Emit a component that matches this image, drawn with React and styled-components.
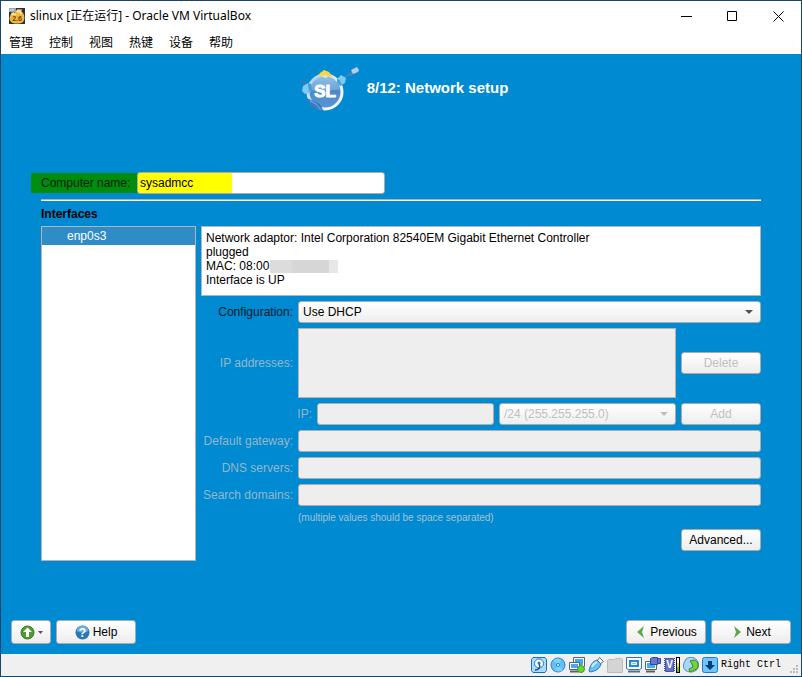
import React from "react";
import styled, { createGlobalStyle, css } from "styled-components";

const GlobalStyle = createGlobalStyle`
  *, *::before, *::after { box-sizing: border-box; }
  body { margin: 0; }
  button, input, select, textarea { font: inherit; color: inherit; margin: 0; }
  svg { display: block; flex: none; }
`;

const AppWindow = styled.div`
  min-height: 100vh;
  display: flex;
  flex-direction: column;
  border: 1px solid #17486b;
  background: #fff;
  color: #000;
  font: 12px/14px "Liberation Sans", Arial, sans-serif;
`;

const TitleBar = styled.header`
  height: 30px;
  display: flex;
  align-items: center;
  padding-left: 8px;
`;

const Title = styled.h1`
  flex: 1;
  margin: 0;
  padding-left: 5px;
  font: 12px/18px "Noto Sans", "Noto Sans CJK SC", sans-serif;
`;

const WindowButton = styled.button`
  width: 46px;
  height: 30px;
  padding: 0;
  border: 0;
  background: none;
  display: grid;
  place-items: center;
`;

const MenuBar = styled.nav`
  height: 23px;
  display: flex;
  align-items: flex-start;
  gap: 16px;
  padding: 2px 0 0 8px;
`;

const MenuItem = styled.button`
  padding: 0;
  border: 0;
  background: none;
  font: 12px/18px "Noto Sans CJK SC", sans-serif;
`;

const Screen = styled.main`
  flex: 1;
  display: flex;
  flex-direction: column;
  background: #008ad2;
`;

const Heading = styled.div`
  height: 118px;
  padding: 8px 0 0 4px;
  display: flex;
  justify-content: center;
  align-items: flex-start;
  gap: 7px;
`;

const StepTitle = styled.h2`
  margin: 0;
  padding-top: 17px;
  color: #fff;
  font-size: 15px;
  line-height: 18px;
`;

const Form = styled.form`
  padding: 0 40px;
`;

const NameRow = styled.div`
  display: flex;
  align-items: center;
  margin-left: -10px;
`;

const NameLabel = styled.label`
  width: 106px;
  padding: 3px 5px 3px 10px;
  color: #001c08;
  background: #008c0d;
`;

const fieldBox = css`
  height: 22px;
  min-width: 0;
  border: 1px solid #aaa;
  border-radius: 3px;
`;

const NameInput = styled.input`
  ${fieldBox}
  width: 248px;
  padding: 0 2px;
  background: linear-gradient(90deg, #ff0 94px, #fff 94px);
`;

const Divider = styled.hr`
  height: 2px;
  margin: 5px 0 6px;
  border: 0;
  border-top: 1px solid #b0b0b0;
  background: #fff;
`;

const SectionTitle = styled.h3`
  margin: 0 0 5px;
  font-size: 12px;
  line-height: 14px;
`;

const Panels = styled.div`
  display: grid;
  grid-template-columns: 155px 1fr;
  gap: 5px;
`;

const InterfaceList = styled.ul`
  min-height: 335px;
  margin: 0;
  padding: 0;
  list-style: none;
  background: #fff;
  border: 1px solid #b4b4b4;
`;

const InterfaceItem = styled.li`
  padding: 2px 25px;
  background: #308cc6;
  color: #fff;
`;

const Details = styled.div`
  display: grid;
  grid-template-columns: 92px 1fr 80px;
  gap: 5px;
  align-content: start;
  align-items: center;
`;

const AdapterInfo = styled.div`
  grid-column: 1 / -1;
  height: 70px;
  padding: 4px;
  background: #fff;
  border: 1px solid #b4b4b4;
`;

const InfoLine = styled.div`
  display: flex;
  align-items: center;
`;

const Redaction = styled.span`
  width: 68px;
  height: 13px;
  margin-left: 1px;
  background: linear-gradient(90deg, #dcdcdc 22px, #d6d6d6 22px 59px, #e6e8e8 59px);
`;

const Label = styled.label`
  justify-self: end;
  white-space: nowrap;
  color: ${(p) => (p.$muted ? "#96b6ca" : "#001a2a")};
`;

const TextInput = styled.input`
  ${fieldBox}
  width: 100%;
  padding: 0 4px;
  ${(p) => p.$wide && "grid-column: 2 / -1;"}
  &:disabled {
    background: #eee;
    border-color: #b0acac;
  }
`;

const AddressArea = styled.textarea`
  display: block;
  width: 100%;
  height: 70px;
  resize: none;
  border: 1px solid #b4b4b4;
  background: #eee;
`;

const SelectBox = styled.div`
  min-width: 0;
  display: grid;
  grid-template-columns: 1fr 16px;
  align-items: center;
  ${(p) => p.$wide && "grid-column: 2 / -1;"}
  > svg { grid-area: 1 / 2; pointer-events: none; }
`;

const Select = styled.select`
  ${fieldBox}
  grid-area: 1 / 1 / 2 / 3;
  width: 100%;
  padding: 0 4px;
  appearance: none;
  background: linear-gradient(#fff, #eee);
  &:disabled { color: #c0c0c0; opacity: 1; }
`;

const AddressRow = styled.div`
  grid-column: 1 / 3;
  margin-left: 97px;
  display: grid;
  grid-template-columns: 14px 1fr 1fr;
  gap: 5px;
  align-items: center;
`;

const Button = styled.button`
  height: ${(p) => (p.$tall ? 24 : 22)}px;
  width: ${(p) => (p.$narrow ? 40 : 80)}px;
  padding: 0;
  display: flex;
  align-items: center;
  justify-content: center;
  gap: 3px;
  white-space: nowrap;
  border: 1px solid #aaa;
  border-radius: 3px;
  background: linear-gradient(#fff, #ededed);
  &:disabled { color: #c0c0c0; }
`;

const Note = styled.p`
  grid-column: 2 / -1;
  margin: 0;
  font-size: 10px;
  line-height: 13px;
  color: #a9c0ce;
`;

const LastCell = styled.div`
  grid-column: 3;
`;

const Footer = styled.footer`
  margin-top: auto;
  padding: 10px;
  display: flex;
  gap: 5px;
`;

const Spacer = styled.span`
  flex: 1;
`;

const StatusBar = styled.div`
  height: 22px;
  display: flex;
  align-items: center;
  justify-content: flex-end;
  gap: 3px;
  background: #f0f0f0;
`;

const HostKey = styled.span`
  font: 10px/14px "Liberation Mono", monospace;
`;

const Grip = styled.svg`
  align-self: flex-end;
  margin-left: 5px;
`;

const LogoText = styled.text`
  font: 700 17px "Liberation Sans", sans-serif;
  fill: #fff;
  stroke: #fff;
`;

const ChipText = styled.text`
  font: 700 10px "Liberation Sans", sans-serif;
  fill: #fff;
`;

const Arrow = ({ muted }) => (
  <svg width="9" height="5"><path d="M0 0h8L4 4z" fill={muted ? "#c0c0c0" : "#505050"} /></svg>
);

const VmIcon = () => (
  <svg width="16" height="16" viewBox="0 0 16 16">
    <path d="M0 0h16v16H0z" fill="#27313e" />
    <path d="M0 0h7v4H0z" fill="#9ba6b5" />
    <path d="M1 2h4M8 2h5" stroke="#e5e9ee" />
    <path d="M2 6c0-2 3-3 4-1 0-4 6-5 7-1 3 2 3 8 1 10-3 2-9 2-12 0-2-2-2-5 0-8z" fill="#f5b63c" />
    <path d="M3 7c1-2 3-1 4 0M8 4c2-2 4 0 4 2" stroke="#ffe3a0" strokeWidth="2" fill="none" />
    <text x="8" y="13" textAnchor="middle" fontFamily="Liberation Sans, sans-serif" fontSize="7" fontWeight="700" fill="#6a461b">2.6</text>
  </svg>
);

const Logo = () => (
  <svg width="62" height="54" viewBox="0 0 62 54" role="img" aria-label="Installer logo">
    <defs>
      <linearGradient id="globe" x2="0" y2="1">
        <stop stopColor="#8bbde8" /><stop offset=".45" stopColor="#4a89cb" /><stop offset="1" stopColor="#5c96d3" />
      </linearGradient>
      <linearGradient id="ring" x2="1" y2="1">
        <stop stopColor="#9ccbed" /><stop offset=".6" stopColor="#f2f4f5" />
      </linearGradient>
    </defs>
    <path d="M2 19l6 2" stroke="#3c78b8" strokeWidth="2" fill="none" />
    <path d="M45 17l7-5" stroke="#3583ca" strokeWidth="2" fill="none" />
    <path d="M50 12l5-4 3 3-5 3z" fill="#4a7fc0" />
    <path d="M53 8l6-3 2 3-1 2-5 2z" fill="#b9cdea" />
    <circle cx="27" cy="30" r="17" fill="url(#globe)" stroke="url(#ring)" strokeWidth="3" />
    <path d="M12 27c2-16 26-17 30 1-9-2-18 5-30-1z" fill="#a3cbea" opacity=".4" />
    <path d="M5 24l5-3 4 4-2 6-5 1-3-3z" fill="#80c9f1" />
    <path d="M10 21l3 1 1 5-3 3z" fill="#3d9edb" />
    <path d="M39 17l4-4 5 3-1 5-5 3-3-3z" fill="#80c9f1" />
    <path d="M39 17l3 1 2 5-2 1-3-3z" fill="#4aa5df" />
    <path d="M20 14l2-3 4-3 5 2 3 4-3 1-4-2-4 2z" fill="#f3d747" />
    <path d="M23 13l3 1 2-1 2 2-3 1z" fill="#d8e6f2" />
    <path d="M9 36l6 3 7 3 4 8-6-3-8-3z" fill="#397bc0" />
    <path d="M12 39l6 3 5 6" stroke="#7caede" fill="none" />
    <LogoText x="27" y="35" textAnchor="middle">SL</LogoText>
  </svg>
);

const UpIcon = () => (
  <svg width="15" height="15" viewBox="0 0 15 15">
    <circle cx="7.500" cy="7.500" r="6.500" fill="#4f9b32" stroke="#377c25" />
    <path d="M7.500 2.500L3 7h3v5h3V7h3z" fill="#fff" />
  </svg>
);

const HelpIcon = () => (
  <svg width="15" height="15" viewBox="0 0 15 15">
    <circle cx="7.500" cy="7.500" r="7" fill="#2677b8" />
    <path d="M1.500 6c1-7 11-7 12 0-4 2-8 2-12 0z" fill="#69ace0" />
    <text x="7.500" y="12" textAnchor="middle" fontFamily="Liberation Sans, sans-serif" fontSize="12" fontWeight="700" fill="#fff">?</text>
  </svg>
);

const Chevron = ({ next }) => (
  <svg width="12" height="12" viewBox="0 0 12 12">
    <path d={next ? "M3 0l7 6-7 6 2-6z" : "M9 0L2 6l7 6-2-6z"} fill="#62a54a" />
  </svg>
);

const statusIcons = [
  ["Hard disk", <>
    <path d="M2 .5h12l1.500 2v11l-1.500 2H2l-1.500-2v-11z" fill="#a5dcff" stroke="#1f6db5" />
    <circle cx="8" cy="6.500" r="4.500" fill="#fff" stroke="#2578bd" />
    <circle cx="8" cy="6" r="1.500" fill="#2578bd" /><path d="M8 7c2 3 0 6-4 6" stroke="#185396" fill="none" strokeWidth="1.500" />
  </>],
  ["Optical drive", <>
    <circle cx="8" cy="8" r="7" fill="#5fc0fa" stroke="#2d7cbe" />
    <path d="M8 8L3 3c3-2 6-2 8 0zM8 8l5 5c-3 2-6 2-8 0z" fill="#7fd0ff" /><circle cx="8" cy="8" r="1.500" fill="#fff" stroke="#267cc1" />
  </>],
  ["Network", <>
    <path d="M4.500.5h11v9h-11z" fill="#fff" stroke="#59636d" /><path d="M6 2h8v6H6z" fill="#45a8f5" />
    <path d="M.5 5.500h10v7H.5z" fill="#fff" stroke="#59636d" /><path d="M2 7h7v4H2z" fill="#45a8f5" />
    <path d="M1 14.500h9" stroke="#59636d" strokeWidth="2" /><circle cx="12" cy="12" r="3.500" fill="#69d52d" stroke="#3e9b1a" />
  </>],
  ["USB", <>
    <path d="M9.500 3.500l2-3 4 4-3 2z" fill="#fff" stroke="#5d6c7b" />
    <path d="M9 3l4 4c-2 6-6 7-11 8l-1-1C2 8 5 4 9 3z" fill="#66bfff" stroke="#2777bd" />
    <path d="M4 10c1-3 3-4 5-5" stroke="#c9eaff" strokeWidth="2" fill="none" />
  </>],
  ["Shared folders", <path d="M.5 15.500v-12l1-1h6l1-1h6l1 1v13z" fill="#d4d4d4" stroke="#bcbcbc" />],
  ["Display", <>
    <path d="M.5.5h15v11l-2 1h-11l-2-1z" fill="#fff" stroke="#3475ac" /><path d="M3 3h10v7H3z" fill="#238be0" /><path d="M5.500 5.500h5v2h-5z" fill="#7bc8ff" stroke="#fff" />
    <path d="M2 14.500h12" stroke="#587185" strokeWidth="2" />
  </>],
  ["Recording", <>
    <path d="M.5 4.500h11v8H.5z" fill="#fff" stroke="#59636d" /><path d="M2 6h8v5H2z" fill="#43acf5" /><path d="M1 14.500h9" stroke="#59636d" strokeWidth="2" />
    <path d="M5.500 1.500l2-1h5v7h-7zM12.500 1.500h3v5h-3z" fill="#6378d0" stroke="#35469a" />
  </>],
  ["Processor", <>
    <path d="M.5 1v14M10.500 1v14" stroke="#4356a1" strokeDasharray="1 1" />
    <path d="M1.500 1.500h8v13h-8z" fill="#6675c8" stroke="#4356a1" />
    <ChipText x="5.500" y="11" textAnchor="middle">V</ChipText>
    <path d="M12 0h4v16h-4z" fill="#000" /><path d="M13 1h2v5h-2z" fill="#fff" /><path d="M13 6h2v4h-2z" fill="#f1e900" /><path d="M13 10h2v5h-2z" fill="#72c900" />
  </>],
  ["Mouse integration", <>
    <path d="M3 2c4-3 10-2 12 3 2 6-2 10-7 10S-1 12 1 6z" fill="#a4d7fa" stroke="#4f8fbd" />
    <path d="M7 4l4-1c4 1 5 5 3 9l-3 1-4 2-1-3 4-2-1-3z" fill="#79d23b" stroke="#398d1b" />
  </>],
  ["Keyboard capture", <>
    <rect x=".5" y=".5" width="15" height="15" rx="2" fill="#6fc6ff" stroke="#207ac9" />
    <path d="M6 4h4v4h3l-5 5-5-5h3z" fill="#063d70" />
  </>],
];

const Field = ({ id, label }) => (
  <>
    <Label htmlFor={id} $muted>{label}</Label>
    <TextInput id={id} disabled $wide />
  </>
);

export default function App() {
  return (
    <AppWindow>
      <GlobalStyle />
      <TitleBar>
        <VmIcon />
        <Title>slinux [正在运行] - Oracle VM VirtualBox</Title>
        <WindowButton aria-label="Minimize"><svg width="11" height="11"><path d="M0 5.500h11" stroke="#000" /></svg></WindowButton>
        <WindowButton aria-label="Maximize"><svg width="11" height="11"><path d="M.5.5h9v9h-9z" stroke="#000" fill="none" /></svg></WindowButton>
        <WindowButton aria-label="Close"><svg width="11" height="11"><path d="M.5.5l10 10M10.500.5l-10 10" stroke="#000" /></svg></WindowButton>
      </TitleBar>
      <MenuBar>
        {["管理", "控制", "视图", "热键", "设备", "帮助"].map((name) => <MenuItem key={name}>{name}</MenuItem>)}
      </MenuBar>
      <Screen>
        <Heading>
          <Logo />
          <StepTitle>8/12: Network setup</StepTitle>
        </Heading>
        <Form onSubmit={(e) => e.preventDefault()}>
          <NameRow>
            <NameLabel htmlFor="computer">Computer name:</NameLabel>
            <NameInput id="computer" defaultValue="sysadmcc" />
          </NameRow>
          <Divider />
          <SectionTitle>Interfaces</SectionTitle>
          <Panels>
            <InterfaceList>
              <InterfaceItem>enp0s3</InterfaceItem>
            </InterfaceList>
            <Details>
              <AdapterInfo>
                <InfoLine>Network adaptor: Intel Corporation 82540EM Gigabit Ethernet Controller</InfoLine>
                <InfoLine>plugged</InfoLine>
                <InfoLine>MAC: 08:00<Redaction /></InfoLine>
                <InfoLine>Interface is UP</InfoLine>
              </AdapterInfo>
              <Label htmlFor="configuration">Configuration:</Label>
              <SelectBox $wide>
                <Select id="configuration"><option>Use DHCP</option></Select>
                <Arrow />
              </SelectBox>
              <Label htmlFor="addresses" $muted>IP addresses:</Label>
              <AddressArea id="addresses" disabled />
              <Button type="button" disabled>Delete</Button>
              <AddressRow>
                <Label htmlFor="ip" $muted>IP:</Label>
                <TextInput id="ip" disabled />
                <SelectBox>
                  <Select aria-label="Netmask" disabled><option>/24 (255.255.255.0)</option></Select>
                  <Arrow muted />
                </SelectBox>
              </AddressRow>
              <Button type="button" disabled>Add</Button>
              <Field id="gateway" label="Default gateway:" />
              <Field id="dns" label="DNS servers:" />
              <Field id="domains" label="Search domains:" />
              <Note>(multiple values should be space separated)</Note>
              <LastCell><Button type="button">Advanced...</Button></LastCell>
            </Details>
          </Panels>
        </Form>
        <Footer>
          <Button $tall $narrow aria-label="Menu"><UpIcon /><svg width="5" height="3"><path d="M0 0h5L2.500 3z" fill="#555" /></svg></Button>
          <Button $tall><HelpIcon />Help</Button>
          <Spacer />
          <Button $tall><Chevron />Previous</Button>
          <Button $tall><Chevron next />Next</Button>
        </Footer>
      </Screen>
      <StatusBar>
        {statusIcons.map(([name, shape]) => (
          <svg key={name} width="16" height="16" viewBox="0 0 16 16" role="img" aria-label={name}>{shape}</svg>
        ))}
        <HostKey>Right Ctrl</HostKey>
        <Grip width="12" height="12" viewBox="0 0 12 12">
          <path d="M7 1h2v2H7zM4 4h2v2H4zM7 4h2v2H7zM1 7h2v2H1zM4 7h2v2H4zM7 7h2v2H7z" fill="#bcbcbc" />
        </Grip>
      </StatusBar>
    </AppWindow>
  );
}
